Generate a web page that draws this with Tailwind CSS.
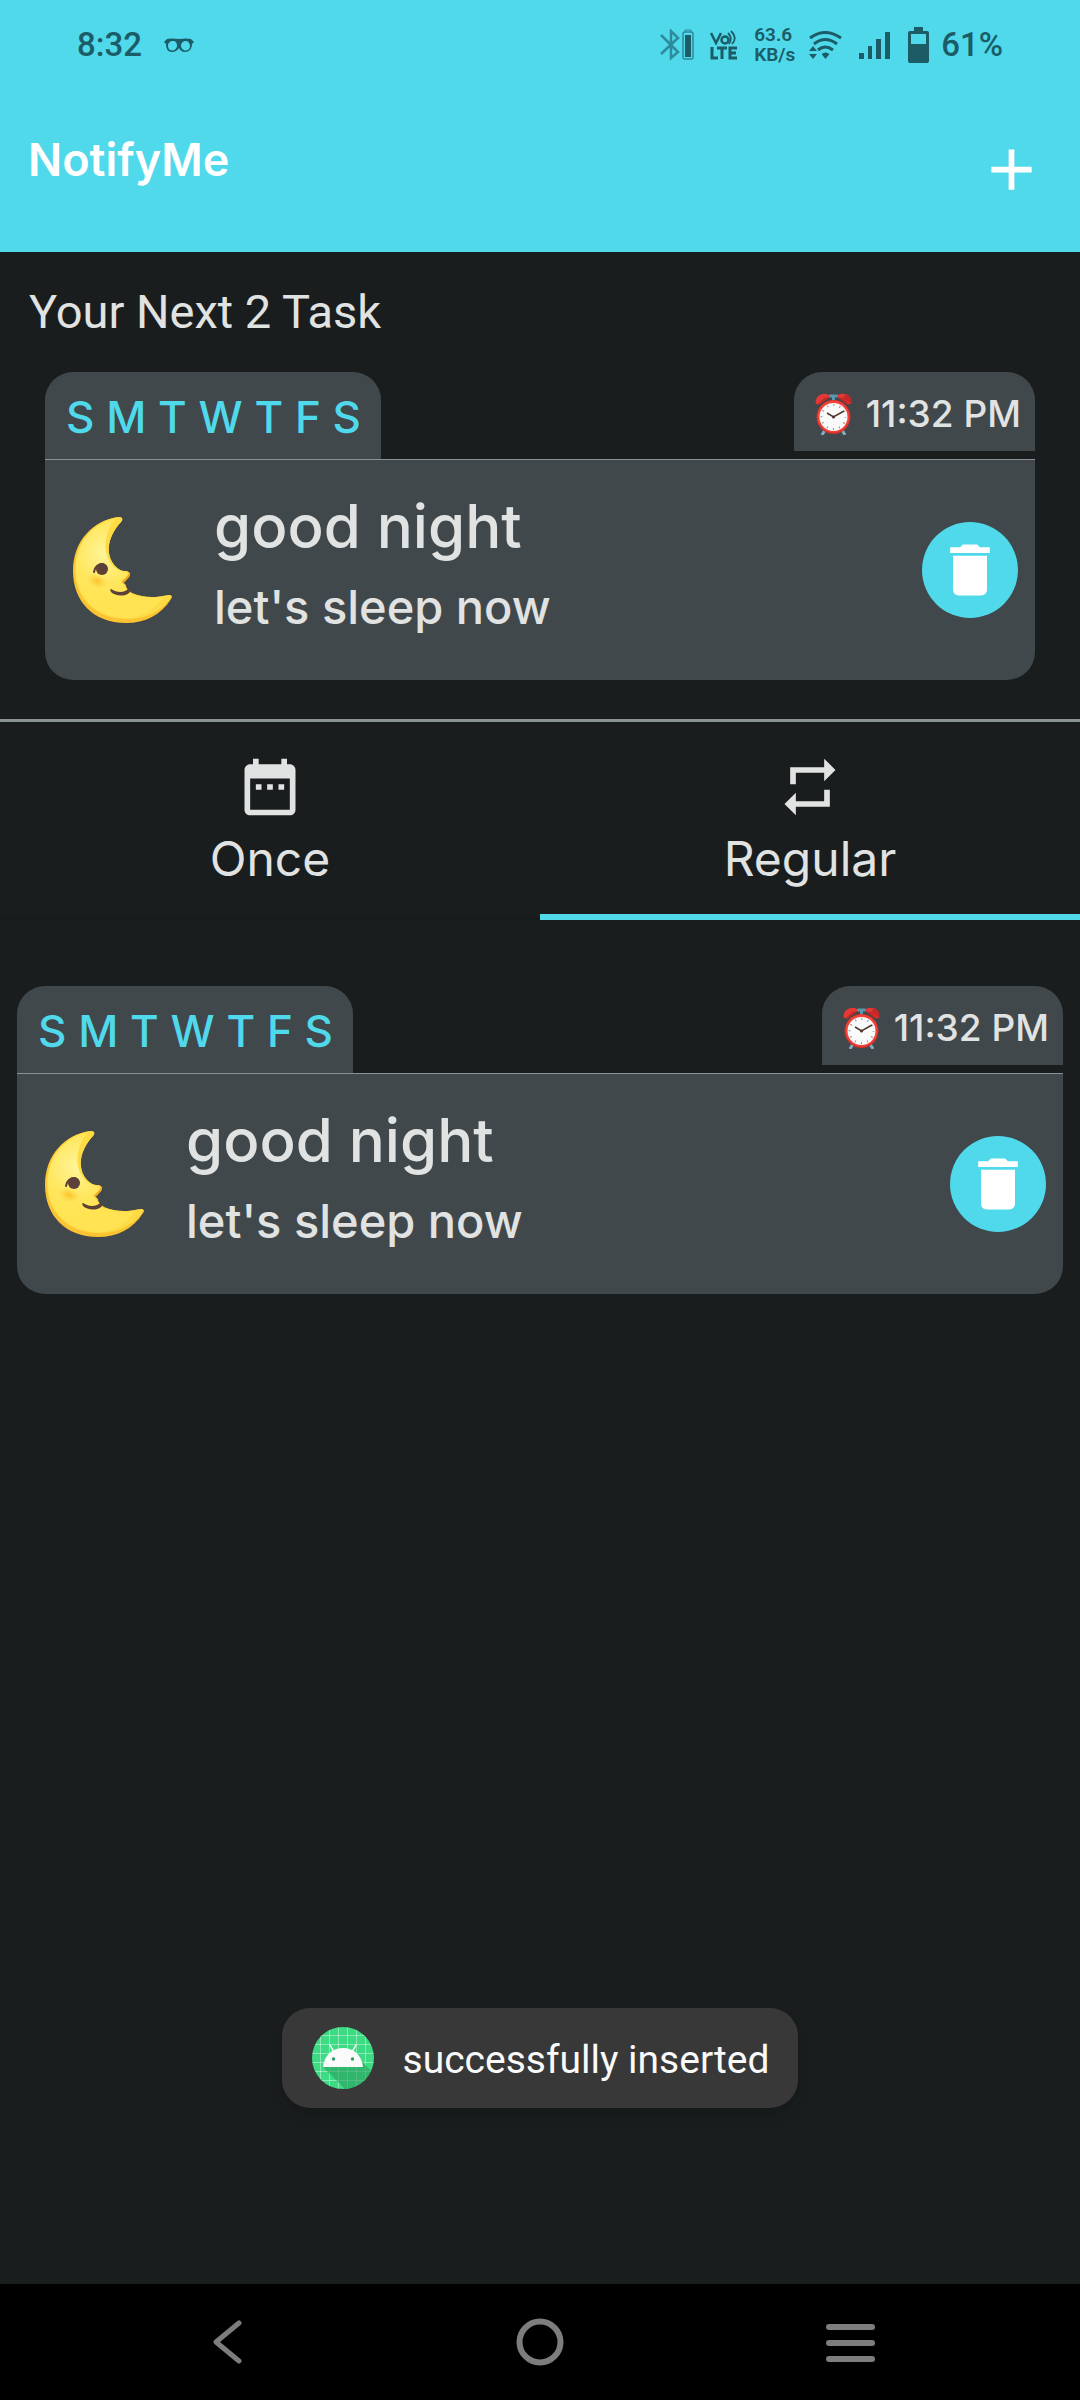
<!DOCTYPE html>
<html lang="en">
<head>
<meta charset="utf-8">
<meta name="viewport" content="width=device-width, initial-scale=1">
<title>NotifyMe</title>
<script src="https://cdn.jsdelivr.net/npm/@tailwindcss/browser@4"></script>
</head>
<body class="flex min-h-screen flex-col bg-[#191d1e] font-['Roboto',sans-serif] text-[#e1e3e3]">

<!-- shared shapes -->
<svg class="absolute size-0" aria-hidden="true">
  <defs>
    <radialGradient id="moonGlow" cx="32" cy="36" r="52" gradientUnits="userSpaceOnUse">
      <stop offset="0" stop-color="#fff59a"/><stop offset="0.6" stop-color="#ffe65c"/><stop offset="1" stop-color="#ffe352"/>
    </radialGradient>
    <radialGradient id="cheek"><stop offset="0" stop-color="#fbc02d"/><stop offset="1" stop-color="#fdd03a" stop-opacity="0"/></radialGradient>
  </defs>
  <symbol id="moon" viewBox="0 0 99 106">
    <path fill="#fcc332" d="M46 0C50 0 50 3 48 5C34 20 32 38 42 49C46 53 49 54 52 54C57 54 58 57 56 60L50 65L53 68C53 72 56 73 59 76C70 81 82 81 96 78C99 78 100 80 98 82C88 98 72 106 53 106C20 106 0 84 0 54C0 24 20 3 46 0Z"/>
    <path fill="#fddb45" d="M46 0C50 0 50 3 48 5C34 20 32 38 42 49C46 53 49 54 52 54C55 54 57 56 55 59L49 65L54 72L58 76C70 81 82 81 96 78C98 78 99 80 97 82C86 96 72 102 54 102C22 102 2 81 2 52C2 25 20 3 46 0Z"/>
    <path fill="url(#moonGlow)" d="M42 2C34 12 30 27 34 39C38 50 45 54 52 55C56 56 55 59 52 62L49 65L53 71L58 77C70 82 80 82 90 80C80 94 68 101 54 101C22 101 3 80 3 52C3 27 19 6 42 2Z"/>
    <ellipse cx="24" cy="64" rx="11" ry="7" fill="url(#cheek)" transform="rotate(20 24 64)"/>
    <path fill="#f0a81f" d="M57 55C58 60 53 63 50 67L49 64C52 62 55 59 57 55Z"/>
    <circle cx="29" cy="52" r="6" fill="#5d4037"/>
    <path d="M21 55C22 49 25 47 30 47" fill="none" stroke="#5d4037" stroke-width="2" stroke-linecap="round"/>
    <path fill="#5d4037" d="M38 72C44 76 51 76 55 72C58 72 58 75 56 76C51 80 42 79 38 75C37 73 37 72 38 72Z"/>
  </symbol>
  <symbol id="alarm" viewBox="0 0 37 42">
    <path d="M10 37L7 42M27 37L30 42" stroke="#82aec0" stroke-width="3"/>
    <path d="M15 3H22M18.500 3V8" stroke="#5b97ad" stroke-width="3" stroke-linecap="round"/>
    <path fill="#e53935" d="M1 11C-1 4 7-2 14 2L15 4L3 11ZM36 11C38 4 30-2 23 2L22 4L34 11Z"/>
    <path fill="#c62828" d="M3 11L9 5L15 4L4 12ZM34 11L28 5L22 4L33 12ZM28 5L31 1C36 3 37 7 36 11Z"/>
    <circle cx="18.500" cy="24" r="17" fill="#d32f2f"/>
    <circle cx="18.500" cy="23.500" r="16" fill="#f44336"/>
    <circle cx="18.500" cy="24" r="14" fill="#fafafa"/>
    <circle cx="18.500" cy="24" r="12" fill="none" stroke="#8d8d8d" stroke-width="2" stroke-dasharray="1 5.283" stroke-dashoffset="0.5"/>
    <path d="M12 20L18.500 24L29 18" fill="none" stroke="#4e342e" stroke-width="1.500"/>
    <circle cx="18.500" cy="24" r="1.500" fill="#4e342e"/>
  </symbol>
  <symbol id="trash" viewBox="0 0 24 24">
    <path fill="currentColor" d="M6 19c0 1.100.9 2 2 2h8c1.100 0 2-.9 2-2V7H6v12zM19 4h-3.500l-1-1h-5l-1 1H5v2h14V4z"/>
  </symbol>
</svg>

<header class="flex h-[252px] flex-col bg-[#50d8eb]">
  <div class="flex h-[90px] items-center px-[77px] text-[#1b5c66]">
    <span class="text-[33px] font-medium">8:32</span>
    <svg class="ml-[22px] h-[14px] w-[30px]" viewBox="0 0 30 14" aria-hidden="true">
      <path fill="currentColor" fill-rule="evenodd" d="M0 4L3 1Q7 0 15 1Q23 0 27 1L30 4L28 6C28 11 25 14 21 14C18 14 16 12 15 10C14 12 11 14 8 14C4 14 2 11 2 6ZM9 3C6 3 4 5 4 8C4 11 6 12.500 8.500 12.500C11 12.500 13 10 13 8C13 5 12 3 9 3ZM22 3C19 3 17 5 17 8C17 10 19 12.500 21.500 12.500C24 12.500 26 11 26 8C26 5 24 3 22 3Z"/>
    </svg>
    <div class="ml-auto flex items-center">
      <svg class="h-8 w-[34px]" viewBox="0 0 34 32" aria-hidden="true">
        <path d="M1 6L18 23L11 29V2L18 9L1 25" fill="none" stroke="#2d8b9a" stroke-width="2.500"/>
        <path d="M25 3V1H31V3" fill="none" stroke="#2d8b9a"/>
        <rect x="23" y="3" width="10" height="27" rx="2" fill="none" stroke="#2d8b9a" stroke-width="1.500"/>
        <rect x="25" y="6" width="6" height="22" fill="currentColor"/>
      </svg>
      <svg class="ml-4 h-[30px] w-[28px]" viewBox="0 0 28 30" aria-hidden="true">
        <g fill="none" stroke="currentColor" stroke-width="2.500">
          <path d="M1 3L6 13L11 3"/><circle cx="15" cy="10" r="3.500"/><path d="M18 3Q23 8 19 14M21 1Q28 8 22 14" stroke-width="1.800"/>
          <path d="M2 17V28H8M7 18H17M12 18V29M27 18H20V28H27M20 23H26" stroke-width="3"/>
        </g>
      </svg>
      <div class="ml-4 w-[55px] text-[19px] leading-5 font-semibold">63.6<br>KB/s</div>
      <svg class="h-7 w-[33px]" viewBox="0 0 33 28" aria-hidden="true">
        <g fill="none" stroke="currentColor" stroke-width="3">
          <path d="M1 7Q16 -4 32 7M5 13Q16 4 28 13M9 19Q16 13 24 19"/>
        </g>
        <path fill="currentColor" d="M16.500 28L12.500 23Q16.500 20 20.500 23ZM4 15L8 20H0ZM4 28L8 23H0Z"/>
      </svg>
      <svg class="ml-[17px] h-7 w-[31px]" viewBox="0 0 31 28" aria-hidden="true">
        <path fill="currentColor" d="M0 22H5V28H0ZM9 15H13V28H9ZM17 8H22V28H17ZM26 1H31V28H26Z"/>
      </svg>
      <svg class="ml-[18px] h-9 w-[21px]" viewBox="0 0 21 36" aria-hidden="true">
        <path fill="currentColor" fill-rule="evenodd" d="M6 0H15V4H19Q21 4 21 6V34Q21 36 19 36H2Q0 36 0 34V6Q0 4 2 4H6ZM3 7V17H18V7Z"/>
      </svg>
      <span class="ml-3 text-[33px] font-medium">61%</span>
    </div>
  </div>
  <div class="flex items-start justify-between pt-10 pr-[34px] pl-7 text-white">
    <h1 class="font-['Inter',sans-serif] text-[45px] leading-[60px] font-semibold">NotifyMe</h1>
    <button type="button" aria-label="Add task" class="mt-[5px]">
      <svg class="size-[69px]" viewBox="0 0 24 24" fill="currentColor"><path d="M19 13h-6v6h-2v-6H5v-2h6V5h2v6h6v2z"/></svg>
    </button>
  </div>
</header>

<main class="flex flex-1 flex-col">
  <section class="border-b-3 border-[#899295] px-[45px] pb-[39px]">
    <h2 class="-ml-4 pt-[30px] text-[47px] leading-[60px]">Your Next 2 Task</h2>
    <article class="mt-[30px] font-['Inter',sans-serif] font-medium">
      <div class="flex items-start justify-between">
        <div class="flex h-[87px] w-[336px] items-center justify-between rounded-t-[28px] bg-[#40484b] pt-[2px] pr-5 pl-[21px] text-[44px] text-[#50d8eb]">
          <span>S</span><span>M</span><span>T</span><span>W</span><span>T</span><span>F</span><span>S</span>
        </div>
        <div class="flex h-[79px] w-[241px] items-center justify-between rounded-t-[28px] bg-[#40484b] pt-1 pr-[14px] pl-[21px]">
          <svg class="h-[42px] w-[37px]" aria-hidden="true"><use href="#alarm"/></svg>
          <time class="text-[37px]">11:32 PM</time>
        </div>
      </div>
      <div class="flex h-[221px] items-center rounded-b-[28px] border-t border-[#899295] bg-[#40484b] pr-[17px] pl-7">
        <svg class="h-[106px] w-[99px]" aria-hidden="true"><use href="#moon"/></svg>
        <div class="ml-[42px] flex-1 pb-2">
          <h3 class="text-[60px] leading-[82px]">good night</h3>
          <p class="text-[47px] leading-[80px]">let's sleep now</p>
        </div>
        <button type="button" aria-label="Delete good night" class="flex size-24 items-center justify-center rounded-full bg-[#50d8eb] text-white">
          <svg class="size-[68px]"><use href="#trash"/></svg>
        </button>
      </div>
    </article>
  </section>

  <nav class="grid grid-cols-2 font-['Inter',sans-serif] text-[48px]" role="tablist">
    <button type="button" role="tab" aria-selected="false" class="flex h-[198px] flex-col items-center border-b-3 border-[#161a1a] pt-[31px]">
      <svg class="size-[68px]" viewBox="0 0 24 24" fill="currentColor"><path d="M9 11H7v2h2v-2zm4 0h-2v2h2v-2zm4 0h-2v2h2v-2zm2-7h-1V2h-2v2H8V2H6v2H5c-1.110 0-1.990.9-1.990 2L3 20c0 1.100.89 2 2 2h14c1.100 0 2-.9 2-2V6c0-1.100-.9-2-2-2zm0 16H5V9h14v11z"/></svg>
      <span class="mt-2 leading-[60px]">Once</span>
    </button>
    <button type="button" role="tab" aria-selected="true" class="flex h-[198px] flex-col items-center border-b-6 border-[#50d8eb] pt-[31px]">
      <svg class="size-[68px]" viewBox="0 0 24 24" fill="currentColor"><path d="M7 7h10v3l4-4-4-4v3H5v6h2V7zm10 10H7v-3l-4 4 4 4v-3h12v-6h-2v4z"/></svg>
      <span class="mt-2 leading-[60px]">Regular</span>
    </button>
  </nav>

  <section class="px-[17px] pt-[66px]">
    <article class="font-['Inter',sans-serif] font-medium">
      <div class="flex items-start justify-between">
        <div class="flex h-[87px] w-[336px] items-center justify-between rounded-t-[28px] bg-[#40484b] pt-[2px] pr-5 pl-[21px] text-[44px] text-[#50d8eb]">
          <span>S</span><span>M</span><span>T</span><span>W</span><span>T</span><span>F</span><span>S</span>
        </div>
        <div class="flex h-[79px] w-[241px] items-center justify-between rounded-t-[28px] bg-[#40484b] pt-1 pr-[14px] pl-[21px]">
          <svg class="h-[42px] w-[37px]" aria-hidden="true"><use href="#alarm"/></svg>
          <time class="text-[37px]">11:32 PM</time>
        </div>
      </div>
      <div class="flex h-[221px] items-center rounded-b-[28px] border-t border-[#899295] bg-[#40484b] pr-[17px] pl-7">
        <svg class="h-[106px] w-[99px]" aria-hidden="true"><use href="#moon"/></svg>
        <div class="ml-[42px] flex-1 pb-2">
          <h3 class="text-[60px] leading-[82px]">good night</h3>
          <p class="text-[47px] leading-[80px]">let's sleep now</p>
        </div>
        <button type="button" aria-label="Delete good night" class="flex size-24 items-center justify-center rounded-full bg-[#50d8eb] text-white">
          <svg class="size-[68px]"><use href="#trash"/></svg>
        </button>
      </div>
    </article>
  </section>

  <div role="status" class="mx-auto mt-auto mb-[176px] flex h-[100px] items-center rounded-[28px] bg-[#383838] pr-[29px] pl-[30px] text-[39px] text-[#fafafa] shadow-lg">
    <svg class="mr-[29px] size-[62px]" viewBox="0 0 62 62" aria-hidden="true">
      <clipPath id="badge"><circle cx="31" cy="31" r="31"/></clipPath>
      <g clip-path="url(#badge)">
        <path fill="#3ddc84" d="M0 0H62V62H0Z"/>
        <path d="M8.500 0V62M17.500 0V62M26.500 0V62M35.500 0V62M44.500 0V62M53.500 0V62M0 8.500H62M0 17.500H62M0 26.500H62M0 35.500H62M0 44.500H62M0 53.500H62" stroke="#fff" stroke-opacity=".4"/>
        <path fill="#2a9d5f" fill-opacity=".6" d="M11 40L34 63H62V47L46 30L51 40Z"/>
        <path d="M18 18L22 25M44 18L40 25" stroke="#fff" stroke-width="1.500"/>
        <path fill="#fafafa" d="M11 40C12 28 21 21 31 21C41 21 50 28 51 40Z"/>
        <circle cx="21.500" cy="32" r="1.700" fill="#2a9d5f"/><circle cx="40.500" cy="32" r="1.700" fill="#2a9d5f"/>
      </g>
    </svg>
    <span class="pt-1">successfully inserted</span>
  </div>
</main>

<footer class="grid h-[116px] grid-cols-[1fr_196px_1fr] items-center bg-black text-[#7d7d7d]">
  <button type="button" aria-label="Back" class="justify-self-end pr-[200px]">
    <svg class="h-11 w-[30px]" viewBox="0 0 30 44"><path d="M27 3L4 22L27 41" fill="none" stroke="currentColor" stroke-width="5" stroke-linecap="round" stroke-linejoin="round"/></svg>
  </button>
  <button type="button" aria-label="Home" class="justify-self-center">
    <svg class="size-12" viewBox="0 0 48 48"><circle cx="24" cy="24" r="20.500" fill="none" stroke="currentColor" stroke-width="6"/></svg>
  </button>
  <button type="button" aria-label="Recent apps" class="justify-self-start pt-[2px] pl-[188px]">
    <svg class="h-[38px] w-[50px]" viewBox="0 0 50 38" fill="currentColor"><rect y="0" width="49" height="6" rx="3"/><rect y="16" width="49" height="6" rx="3"/><rect y="32" width="49" height="6" rx="3"/></svg>
  </button>
</footer>
</body>
</html>
